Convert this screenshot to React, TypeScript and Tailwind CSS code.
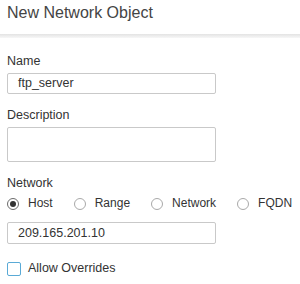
const font = { fontFamily: '"Liberation Sans", Arial, sans-serif' };

type RadioProps = { label: string; checked?: boolean };

function Radio({ label, checked = false }: RadioProps) {
  return (
    <label className="flex items-center">
      <span
        className={`flex h-[12px] w-[12px] items-center justify-center rounded-full border ${
          checked ? "border-[#6b6b6b]" : "border-[#a9a9a9]"
        } bg-white`}
      >
        {checked && <span className="h-[6px] w-[6px] rounded-full bg-[#333]" />}
      </span>
      <span className="ml-[9px] text-[12px] leading-[15px] text-[#333]">{label}</span>
    </label>
  );
}

export default function App() {
  return (
    <div className="h-[284px] w-[300px] overflow-hidden bg-white" style={font}>
      <div className="h-[34px] pl-[7px] pt-[4px]">
        <h1 className="text-[16px] font-normal leading-[18px] text-[#444]">New Network Object</h1>
      </div>
      <div className="h-[4px] bg-gradient-to-b from-[#e3e3e3] to-[#f7f7f7]" />

      <div className="px-[7px] pt-[16px]">
        <div className="text-[12.5px] leading-[15px] text-[#333]">Name</div>
        <div className="mt-[4px] flex h-[21px] w-[209px] items-center rounded-[2px] border border-[#c9c9c9] pl-[10px] text-[12.5px] text-[#333]">
          ftp_server
        </div>

        <div className="mt-[14px] text-[12.5px] leading-[15px] text-[#333]">Description</div>
        <div className="mt-[4px] h-[35px] w-[209px] rounded-[2px] border border-[#c9c9c9]" />

        <div className="mt-[14px] text-[12.5px] leading-[15px] text-[#333]">Network</div>
        <div className="mt-[5px] flex items-center gap-[21px]">
          <Radio label="Host" checked />
          <Radio label="Range" />
          <Radio label="Network" />
          <Radio label="FQDN" />
        </div>
        <div className="mt-[11px] flex h-[22px] w-[209px] items-center rounded-[2px] border border-[#c9c9c9] pl-[10px] text-[12.5px] text-[#333]">
          209.165.201.10
        </div>

        <label className="mt-[17px] flex items-center">
          <span className="h-[14px] w-[14px] rounded-[2px] border border-[#5aaad6] bg-white" />
          <span className="ml-[7px] text-[12.5px] leading-[15px] text-[#333]">Allow Overrides</span>
        </label>
      </div>
    </div>
  );
}
